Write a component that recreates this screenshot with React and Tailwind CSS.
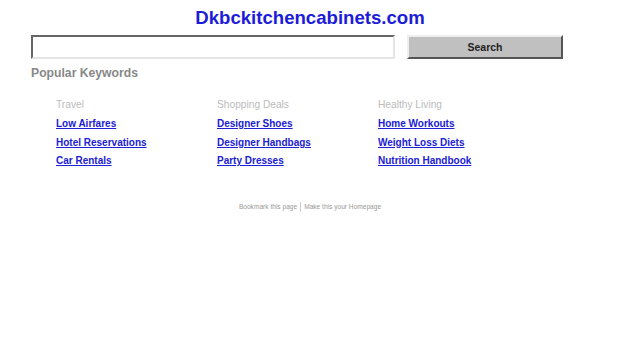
export default function App() {
  const cols = [
    { h: "Travel", l: ["Low Airfares", "Hotel Reservations", "Car Rentals"] },
    { h: "Shopping Deals", l: ["Designer Shoes", "Designer Handbags", "Party Dresses"] },
    { h: "Healthy Living", l: ["Home Workouts", "Weight Loss Diets", "Nutrition Handbook"] },
  ];
  return (
    <div className="w-[620px] h-[343px] bg-white font-['Liberation_Sans',Arial,sans-serif]">
      <div className="pt-[7px] text-center text-[18.6px] leading-[22px] font-bold text-[#1c1cd8]">
        Dkbckitchencabinets.com
      </div>
      <div className="flex mt-[6px] ml-[31px] gap-[12px]">
        <div className="w-[364px] h-[24px] border-2 border-t-[#666] border-l-[#666] border-r-[#e5e5e5] border-b-[#e5e5e5] bg-white" />
        <div className="w-[156px] h-[24px] pt-px border-2 border-t-[#eee] border-l-[#eee] border-r-[#555] border-b-[#555] bg-[#c0c0c0] flex items-center justify-center text-[10.5px] font-bold text-[#222]">
          Search
        </div>
      </div>
      <div className="ml-[31px] mt-[6px] text-[12.2px] leading-[16px] font-bold text-[#888]">Popular Keywords</div>
      <div className="flex ml-[56px] mt-[17px]">
        {cols.map((c) => (
          <div key={c.h} className="w-[161px]">
            <div className="text-[10.2px] leading-[14px] text-[#bbb]">{c.h}</div>
            <div className="flex flex-col gap-[4.5px] mt-[5px]">
              {c.l.map((x) => (
                <div key={x} className="text-[10px] leading-[14px] font-bold text-[#2020d4] underline">{x}</div>
              ))}
            </div>
          </div>
        ))}
      </div>
      <div className="mt-[34px] flex justify-center items-center text-[6.6px] text-[#999]">
        <span>Bookmark this page</span>
        <span className="mx-[3px] w-px h-[10px] bg-[#ccc]" />
        <span>Make this your Homepage</span>
      </div>
    </div>
  );
}
